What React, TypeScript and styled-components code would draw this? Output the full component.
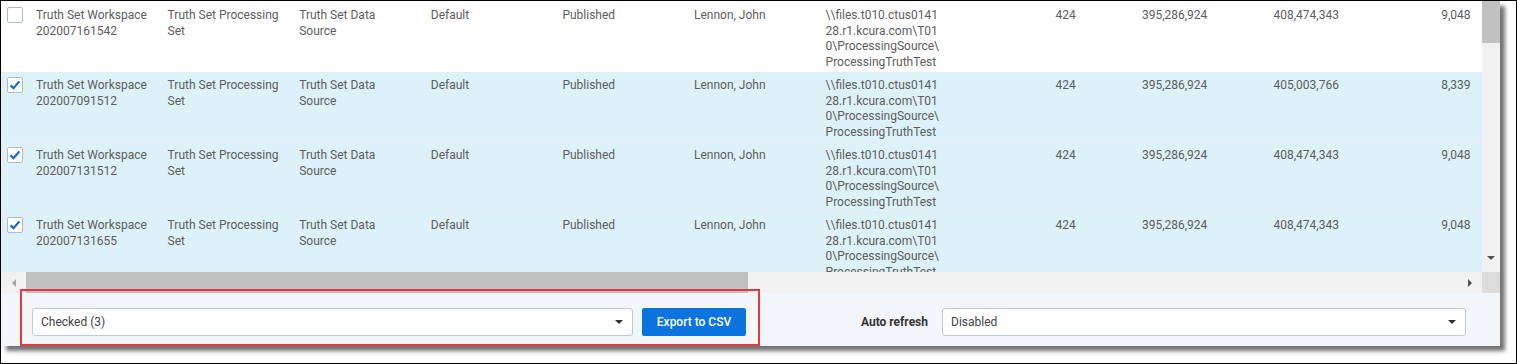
import styled, { createGlobalStyle } from 'styled-components';

const GlobalStyle = createGlobalStyle`
  body {
    margin: 0;
    background: #ffffff;
    font-family: Roboto, 'Liberation Sans', Arial, sans-serif;
  }
`;

const Frame = styled.div`
  position: relative;
  width: 1517px;
  height: 364px;
  box-sizing: border-box;
  border: 1px solid #000000;
  background: #ffffff;
`;

const Panel = styled.div`
  position: relative;
  display: flex;
  flex-direction: column;
  width: 1499px;
  height: 345px;
  background: #ffffff;
  box-shadow: 5px 5px 4px rgba(0, 0, 0, 0.55);
`;

const GridArea = styled.div`
  display: grid;
  grid-template-columns: 1fr 18px;
  grid-template-rows: 271px 21px;
`;

const Viewport = styled.div`
  overflow: hidden;
  padding-top: 2px;
`;

const Row = styled.div<{ $selected: boolean }>`
  display: grid;
  grid-template-columns: 27px repeat(11, 131.6px) 200px;
  height: 70px;
  box-sizing: border-box;
  border-bottom: 1px solid #e4ebef;
  background: ${(p) => (p.$selected ? '#dcf1f8' : '#ffffff')};
`;

const CheckCell = styled.div`
  padding: 4px 0 0 6px;
`;

const Box = styled.div`
  display: flex;
  align-items: center;
  justify-content: center;
  width: 16px;
  height: 16px;
  box-sizing: border-box;
  border: 1px solid #aebbcb;
  border-radius: 2px;
  background: #ffffff;
`;

const Cell = styled.div<{ $right?: boolean }>`
  padding: 5px 5px 0 8px;
  font-size: 12px;
  line-height: 15.5px;
  color: #5e5e5e;
  white-space: nowrap;
  text-align: ${(p) => (p.$right ? 'right' : 'left')};
`;

const VTrack = styled.div`
  display: flex;
  flex-direction: column;
  justify-content: space-between;
  background: #f1f1f1;
`;

const VThumb = styled.div`
  height: 42px;
  background: #c1c1c1;
`;

const ArrowBtn = styled.div<{ $w: number; $h: number }>`
  display: flex;
  align-items: center;
  justify-content: center;
  flex: none;
  width: ${(p) => p.$w}px;
  height: ${(p) => p.$h}px;
`;

const HTrack = styled.div`
  display: flex;
  align-items: stretch;
  background: #f1f1f1;
`;

const HThumb = styled.div`
  width: 722px;
  background: #c1c1c1;
`;

const Spacer = styled.div`
  flex: 1;
`;

const Corner = styled.div`
  background: #dcdcdc;
`;

const Footer = styled.div`
  flex: 1;
  display: flex;
  align-items: center;
  padding: 5px 34px 0 31px;
  background: #f3f6f9;
`;

const Select = styled.div<{ $w: number }>`
  display: flex;
  align-items: center;
  justify-content: space-between;
  width: ${(p) => p.$w}px;
  height: 28px;
  box-sizing: border-box;
  padding: 0 9px 0 8px;
  border: 1px solid #bccbd9;
  border-radius: 3px;
  background: #ffffff;
  font-size: 12px;
  color: #444444;
`;

const ExportButton = styled.div`
  display: flex;
  align-items: center;
  justify-content: center;
  width: 104px;
  height: 28px;
  margin-left: 9px;
  border-radius: 2px;
  background: #0b74de;
  color: #ffffff;
  font-size: 12px;
  font-weight: 500;
`;

const Label = styled.div`
  margin-left: auto;
  margin-right: 14px;
  font-size: 12px;
  font-weight: 700;
  color: #333333;
`;

const Annotation = styled.div`
  position: absolute;
  left: 19px;
  top: 288px;
  width: 740px;
  height: 57px;
  box-sizing: border-box;
  border: 2px solid #e5383e;
  pointer-events: none;
`;

const Tri = ({ dir, color }: { dir: 'down' | 'left' | 'right'; color: string }) => {
  const pts = {
    down: '0,0 8,0 4,4',
    left: '4,0 4,8 0,4',
    right: '0,0 0,8 4,4',
  }[dir];
  const w = dir === 'down' ? 8 : 4;
  const h = dir === 'down' ? 4 : 8;
  return (
    <svg width={w} height={h} viewBox={`0 0 ${w} ${h}`}>
      <polygon points={pts} fill={color} />
    </svg>
  );
};

const CheckMark = () => (
  <svg width="12" height="12" viewBox="0 0 12 12">
    <path d="M1.6 6.4 L4.5 9.2 L10.4 2.4" fill="none" stroke="#1565d6" strokeWidth="2.2" />
  </svg>
);

const path = ['\\\\files.t010.ctus0141', '28.r1.kcura.com\\T01', '0\\ProcessingSource\\', 'ProcessingTruthTest'];

const rows = [
  { checked: false, id: '202007161542', total: '408,474,343', last: '9,048' },
  { checked: true, id: '202007091512', total: '405,003,766', last: '8,339' },
  { checked: true, id: '202007131512', total: '408,474,343', last: '9,048' },
  { checked: true, id: '202007131655', total: '408,474,343', last: '9,048' },
];

const Lines = ({ lines }: { lines: string[] }) => (
  <>
    {lines.map((l, i) => (
      <div key={i}>{l}</div>
    ))}
  </>
);

const App = () => {
  return (
    <>
      <GlobalStyle />
      <Frame>
        <Panel>
          <GridArea>
            <Viewport>
              {rows.map((r) => (
                <Row key={r.id} $selected={r.checked}>
                  <CheckCell>
                    <Box>{r.checked && <CheckMark />}</Box>
                  </CheckCell>
                  <Cell>
                    <Lines lines={['Truth Set Workspace', r.id]} />
                  </Cell>
                  <Cell>
                    <Lines lines={['Truth Set Processing', 'Set']} />
                  </Cell>
                  <Cell>
                    <Lines lines={['Truth Set Data', 'Source']} />
                  </Cell>
                  <Cell>Default</Cell>
                  <Cell>Published</Cell>
                  <Cell>Lennon, John</Cell>
                  <Cell>
                    <Lines lines={path} />
                  </Cell>
                  <Cell $right>424</Cell>
                  <Cell $right>395,286,924</Cell>
                  <Cell $right>{r.total}</Cell>
                  <Cell $right>{r.last}</Cell>
                  <Cell />
                </Row>
              ))}
            </Viewport>
            <VTrack>
              <VThumb />
              <ArrowBtn $w={18} $h={17} style={{ marginBottom: 6 }}>
                <Tri dir="down" color="#505050" />
              </ArrowBtn>
            </VTrack>
            <HTrack>
              <ArrowBtn $w={25} $h={21}>
                <Tri dir="left" color="#a3a3a3" />
              </ArrowBtn>
              <HThumb />
              <Spacer />
              <ArrowBtn $w={25} $h={21}>
                <Tri dir="right" color="#505050" />
              </ArrowBtn>
            </HTrack>
            <Corner />
          </GridArea>
          <Footer>
            <Select $w={601}>
              <span>Checked (3)</span>
              <Tri dir="down" color="#333333" />
            </Select>
            <ExportButton>Export to CSV</ExportButton>
            <Label>Auto refresh</Label>
            <Select $w={524}>
              <span>Disabled</span>
              <Tri dir="down" color="#333333" />
            </Select>
          </Footer>
          <Annotation />
        </Panel>
      </Frame>
    </>
  );
};

export default App;
